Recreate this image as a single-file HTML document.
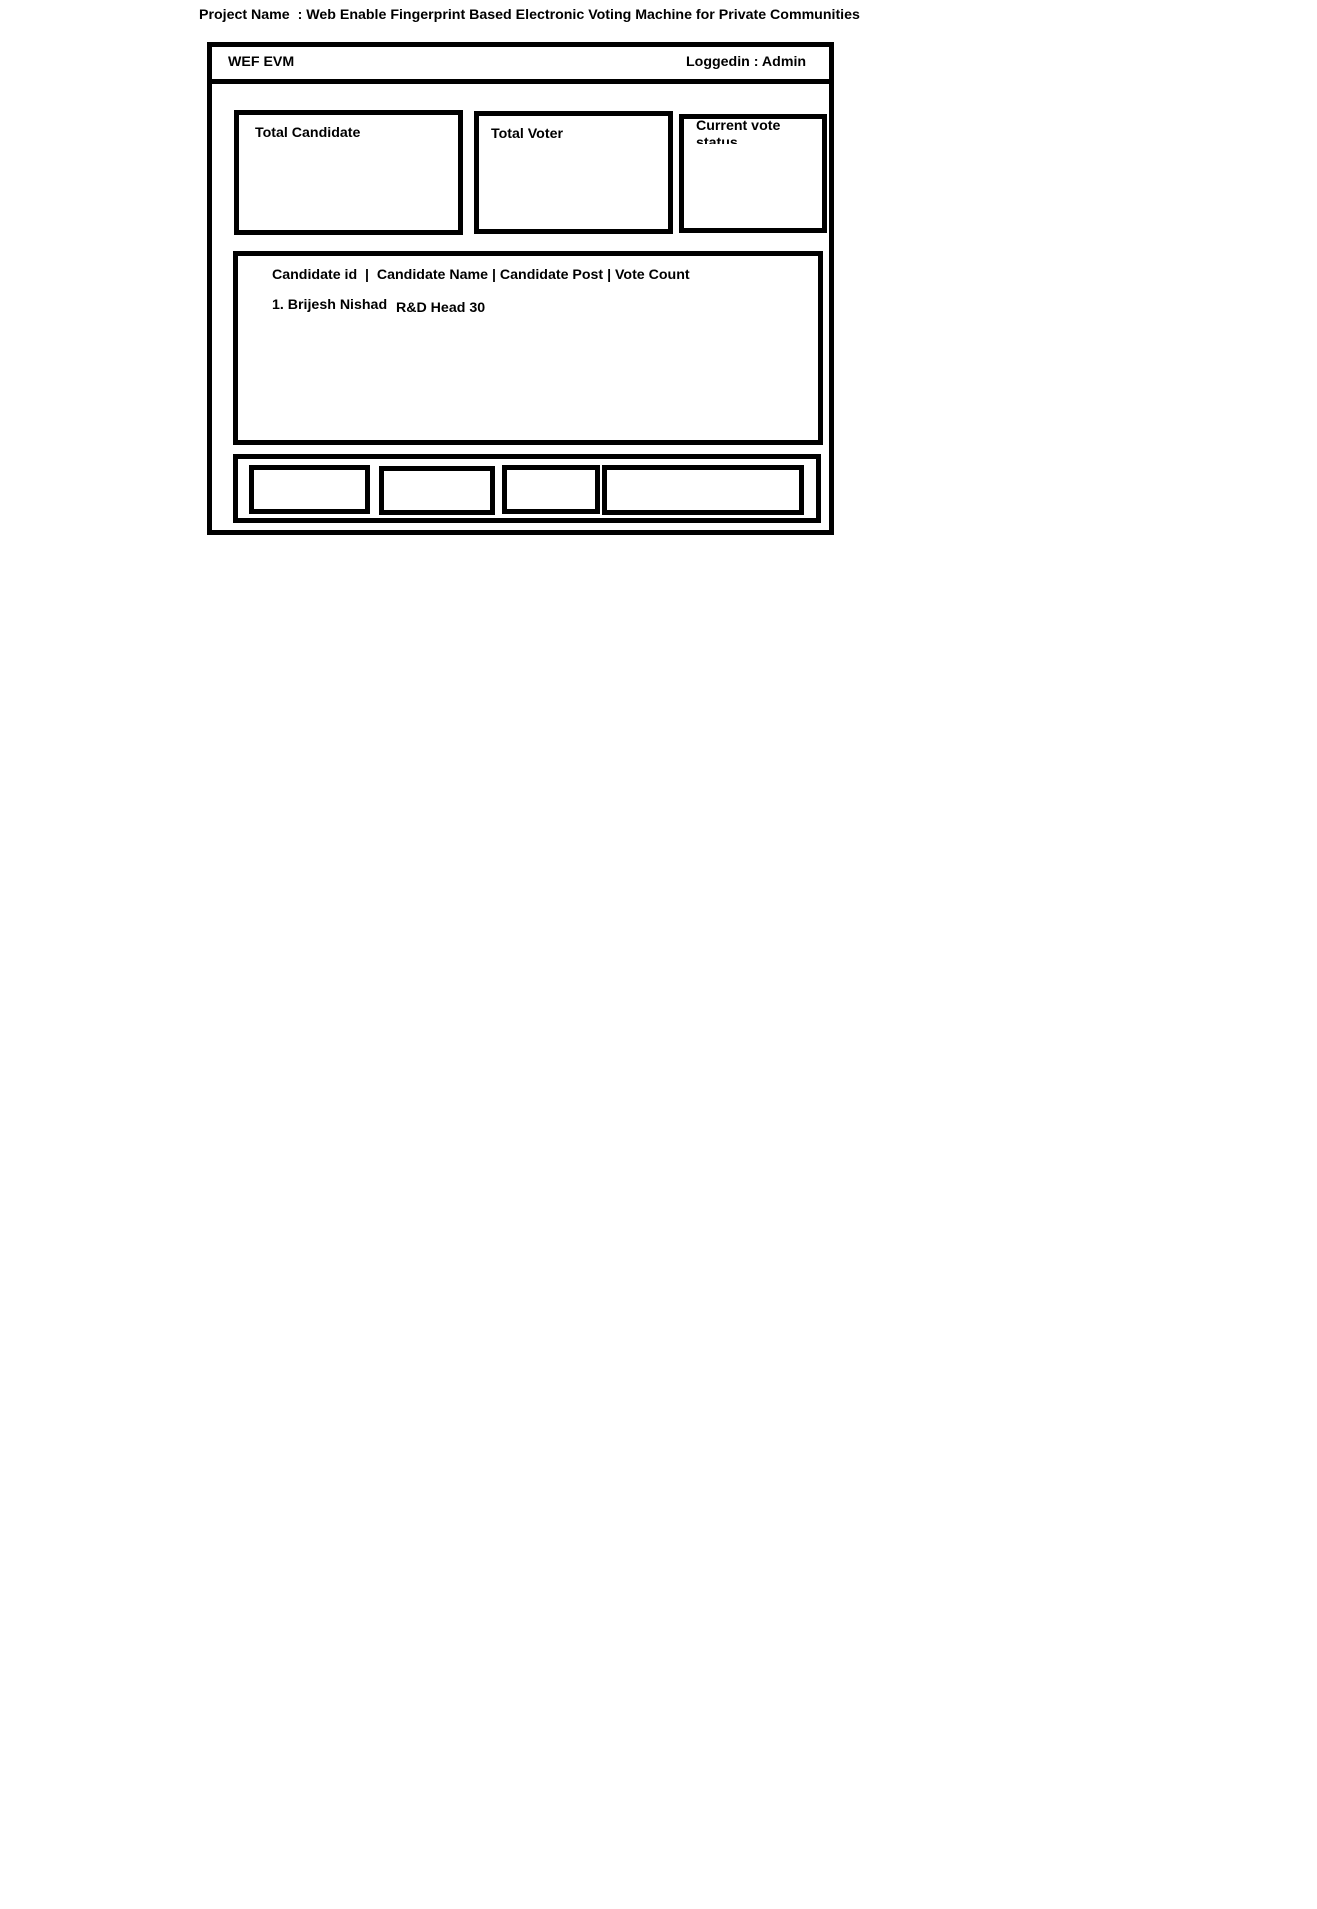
<!DOCTYPE html>
<html><head><meta charset="utf-8"><style>
body{margin:0;width:1317px;height:1909px;background:#fff;position:relative;font-family:"Liberation Sans",sans-serif;font-weight:bold;font-size:14.2px;color:#000;overflow:hidden}
.b{position:absolute;border:5px solid #000;box-sizing:border-box}
.t{position:absolute;white-space:pre;line-height:17px}
</style></head><body>
<div class="t" style="left:199px;top:7px">Project Name  : Web Enable Fingerprint Based Electronic Voting Machine for Private Communities</div>
<div class="b" style="left:207px;top:42px;width:627px;height:493px"></div>
<div style="position:absolute;left:207px;top:79px;width:627px;height:5px;background:#000"></div>
<div class="t" style="left:228px;top:54px">WEF EVM</div>
<div class="t" style="left:686px;top:54px">Loggedin : Admin</div>
<div class="b" style="left:234px;top:110px;width:229px;height:125px"></div>
<div class="b" style="left:474px;top:111px;width:199px;height:123px"></div>
<div class="b" style="left:679px;top:114px;width:148px;height:119px"></div>
<div class="t" style="left:255px;top:125px">Total Candidate</div>
<div class="t" style="left:491px;top:126px">Total Voter</div>
<div style="position:absolute;left:696px;top:118px;width:120px;height:26px;overflow:hidden"><div class="t" style="left:0;top:0">Current vote
status</div></div>
<div class="b" style="left:233px;top:251px;width:590px;height:194px"></div>
<div class="t" style="left:272px;top:267px">Candidate id  |  Candidate Name | Candidate Post | Vote Count</div>
<div class="t" style="left:272px;top:297px">1. Brijesh Nishad</div>
<div class="t" style="left:396px;top:300px">R&amp;D Head 30</div>
<div class="b" style="left:233px;top:454px;width:588px;height:69px"></div>
<div class="b" style="left:249px;top:465px;width:121px;height:49px"></div>
<div class="b" style="left:379px;top:466px;width:116px;height:49px"></div>
<div class="b" style="left:502px;top:465px;width:98px;height:49px"></div>
<div class="b" style="left:602px;top:465px;width:202px;height:50px"></div>
</body></html>
